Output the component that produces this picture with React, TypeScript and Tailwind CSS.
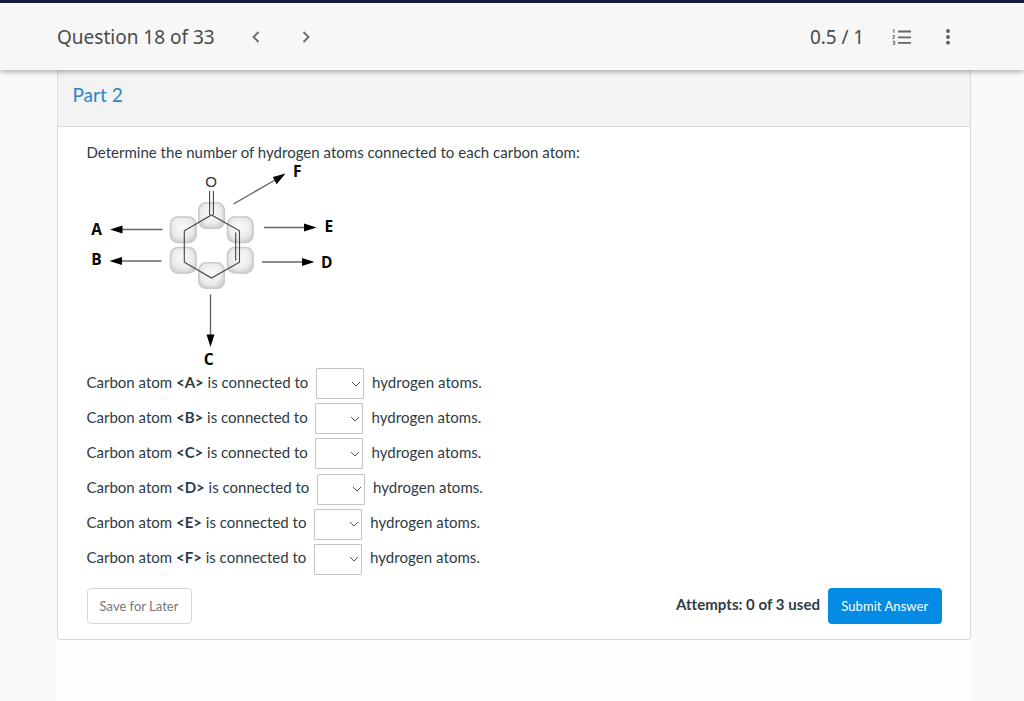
import { useState } from 'react';

const atoms = ['A', 'B', 'C', 'D', 'E', 'F'];

const pads = [
  { x: 198.3, y: 202.3 },
  { x: 170, y: 216.5 },
  { x: 227, y: 216.5 },
  { x: 170, y: 247 },
  { x: 227, y: 247 },
  { x: 198.3, y: 262.3 },
];

const labels = [
  { text: 'A', x: 91.3, y: 234.8 },
  { text: 'B', x: 91.3, y: 264.5 },
  { text: 'C', x: 203.7, y: 364.5 },
  { text: 'D', x: 321, y: 267.6 },
  { text: 'E', x: 324.5, y: 231.6 },
  { text: 'F', x: 293, y: 177.3 },
];

const arrows = [
  { line: 'M162.5 229.5H120', head: 'M110 229.5l12.5-4v8z' },
  { line: 'M161.5 261H120', head: 'M109.5 261l12.5-4v8z' },
  { line: 'M264 227.5H306', head: 'M316.5 227.5l-12.5-4v8z' },
  { line: 'M262 262H304', head: 'M314.5 262l-12.5-4v8z' },
  { line: 'M210.5 294.5V336', head: 'M210.5 347l-4-12.5h8z' },
  { line: 'M233.5 204L276 179.5', head: 'M285.5 173.5L272.8 177l3.8 7.2z' },
];

function Molecule() {
  return (
    <svg width="260" height="214" viewBox="87 154 260 214" className="-mt-2 block overflow-visible">
      <defs>
        <radialGradient id="pad" cx="0.48" cy="0.42" r="0.72">
          <stop offset="0" stopColor="#fafafa" />
          <stop offset="0.55" stopColor="#ebebeb" />
          <stop offset="1" stopColor="#bdbdbd" />
        </radialGradient>
      </defs>
      {pads.map((p, i) => (
        <g key={i}>
          <rect x={p.x} y={p.y} width="26.5" height="26.5" rx="8" fill="url(#pad)" />
          <rect x={p.x + 0.5} y={p.y + 0.5} width="25.5" height="25.5" rx="7.5" fill="none" stroke="#cacaca" strokeWidth="1.6" />
        </g>
      ))}
      {/* Ring and double bonds */}
      <g fill="none" stroke="#444" strokeWidth="1.1">
        <path d="M211.5 215L239.5 230.7V262.3L211.5 278L184.3 262.3V230.7Z" />
        <path d="M235.7 232.5V260.5" />
        <path d="M209.6 191V215M213.4 191V215" />
      </g>
      <text x="211" y="187.3" textAnchor="middle" className="font-['Liberation_Sans'] text-[15px]" fill="#333">O</text>
      {arrows.map((a) => (
        <g key={a.line}>
          <path d={a.line} stroke="#666" strokeWidth="1.4" />
          <path d={a.head} fill="#000" />
        </g>
      ))}
      {labels.map((l) => (
        <text key={l.text} x={l.x} y={l.y} className="font-['Open_Sans'] text-[15.5px] font-bold" fill="#000">
          {l.text}
        </text>
      ))}
    </svg>
  );
}

function AtomRow({ atom }: { atom: string }) {
  const [count, setCount] = useState('');
  return (
    <div className="flex h-[35.2px] items-start">
      <span className="whitespace-pre pt-[2.5px]">
        Carbon atom <b className="font-bold">&lt;{atom}&gt;</b> is connected to
      </span>
      <div className="relative ml-[7.7px] mr-2 h-[31px] w-12 shrink-0">
        <select
          value={count}
          onChange={(e) => setCount(e.target.value)}
          className="h-full w-full appearance-none rounded-[1px] border border-[#c4c4c4] bg-white pl-2"
        >
          <option value=""></option>
          {[0, 1, 2, 3].map((n) => (
            <option key={n}>{n}</option>
          ))}
        </select>
        <svg width="10" height="6" viewBox="0 0 10 6" className="pointer-events-none absolute right-[3px] top-[12.5px]">
          <path d="M1 1l4 4 4-4" fill="none" stroke="#555" strokeWidth="1" />
        </svg>
      </div>
      <span className="pt-[2.5px] tracking-[0.06px]">hydrogen atoms.</span>
    </div>
  );
}

export default function App() {
  return (
    <div className="flex h-[701px] flex-col overflow-hidden bg-[#fafafa] font-['Lato',sans-serif] text-[#2d3b45]">
      <header className="relative z-10 flex h-[70px] shrink-0 items-center border-t-3 border-[#161b42] bg-[#f7f7f7] pl-[57px] pr-[73px] font-['Noto_Sans',sans-serif] text-[19px] text-[#4a4a4a] shadow-[0_1px_6px_rgba(0,0,0,0.4)]">
        <h1 className="w-[195px] whitespace-nowrap pt-[2px]">Question 18 of 33</h1>
        <button aria-label="Previous question">
          <svg width="8" height="12" viewBox="0 0 8 12">
            <path d="M6.5 1L1.5 6l5 5" fill="none" stroke="#666" strokeWidth="1.8" />
          </svg>
        </button>
        <button aria-label="Next question" className="ml-[42px]">
          <svg width="8" height="12" viewBox="0 0 8 12">
            <path d="M1.5 1l5 5-5 5" fill="none" stroke="#666" strokeWidth="1.8" />
          </svg>
        </button>
        <span className="ml-auto whitespace-nowrap pt-[2px] tracking-[-0.1px]">0.5 / 1</span>
        <button aria-label="Question list" className="ml-[28px]">
          <svg width="20" height="18" viewBox="0 0 20 18" fill="none" stroke="#666">
            <path d="M6 3.5h13M6 9.3h13M6 14.8h13" strokeWidth="1.8" />
            <path d="M.8 2.2l1.2-.7v3.3M.7 7.7h2L.8 10.3h2M.7 13.2h2v3.2h-2M1.3 14.8h1.4" strokeWidth="1" />
          </svg>
        </button>
        <button aria-label="More options" className="ml-[33px]">
          <svg width="6" height="18" viewBox="0 0 6 18" fill="#5c5c5c">
            <circle cx="3" cy="3" r="1.9" />
            <circle cx="3" cy="9" r="1.9" />
            <circle cx="3" cy="14.7" r="1.9" />
          </svg>
        </button>
      </header>

      <main className="ml-[57px] w-[914px] flex-1 bg-[#fefefe]">
        <section className="h-[570px] rounded-b border border-t-0 border-[#d9d9d9] bg-white">
          <div className="h-[57px] border-b border-[#dadada] bg-[#f3f3f3] pl-[14.5px] pt-[11px] text-[19px] leading-7 text-[#2386d0]">
            Part 2
          </div>
          <div className="px-[28.5px] pt-[14px] text-[15px] leading-[22px]">
            <p className="h-[21px] tracking-[0.015px]">Determine the number of hydrogen atoms connected to each carbon atom:</p>
            <Molecule />
            {atoms.map((atom) => (
              <AtomRow key={atom} atom={atom} />
            ))}
            <div className="mt-[8.8px] flex items-start">
              <button className="h-9 w-[105px] rounded border border-[#d6d6d6] text-[13px] text-[#777]">Save for Later</button>
              <span className="ml-auto mr-2 pt-[5px] font-bold tracking-[0.04px]">Attempts: 0 of 3 used</span>
              <button className="h-9 w-[113.5px] rounded bg-[#048be6] text-[13px] tracking-[0.06px] text-white">Submit Answer</button>
            </div>
          </div>
        </section>
      </main>
    </div>
  );
}
